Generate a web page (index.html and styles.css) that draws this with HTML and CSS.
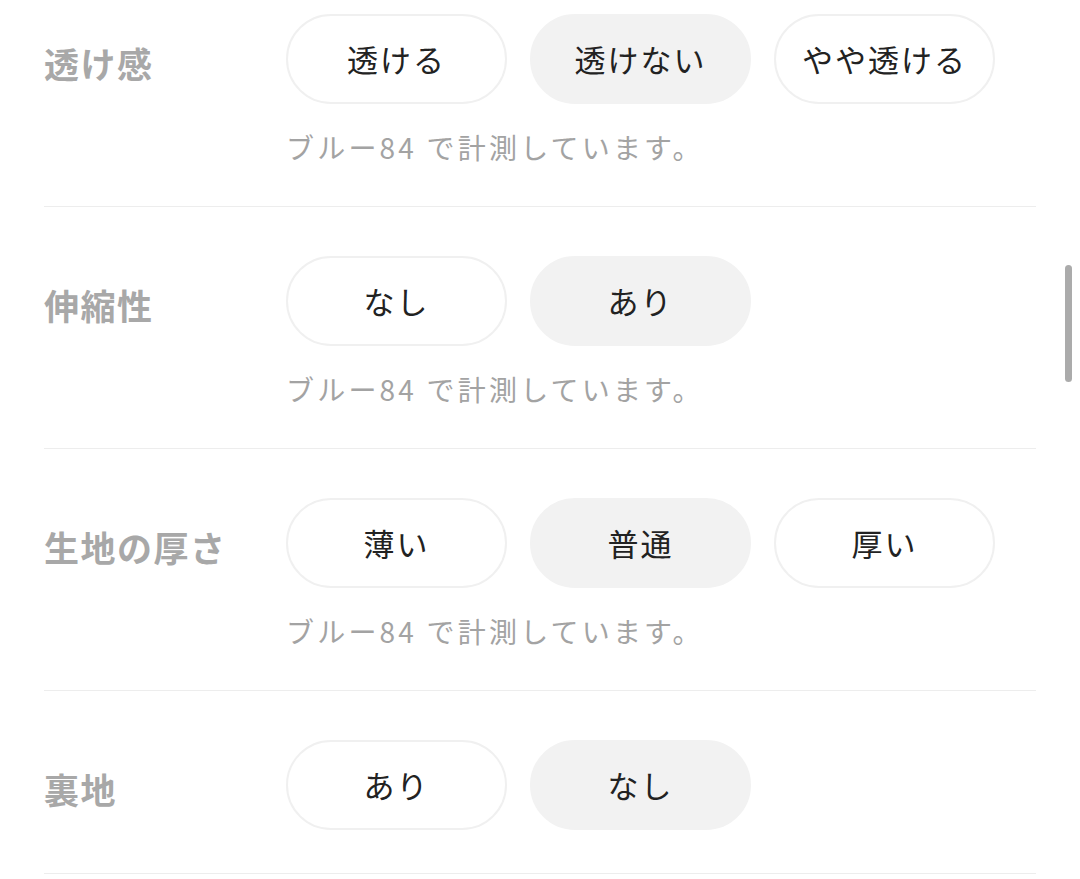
FILE: index.html
```html
<!DOCTYPE html>
<html lang="ja">
<head>
    <meta charset="UTF-8">
    <title>生地の特徴</title>
    <link rel="stylesheet" href="styles.css">
</head>
<body>
<div id="spec-list">
    <div class="spec-row">
        <div class="spec-label">透け感</div>
        <div class="spec-body">
            <div class="option-list">
                <span class="option">透ける</span>
                <span class="option selected">透けない</span>
                <span class="option">やや透ける</span>
            </div>
            <div class="spec-note">ブルー84 で計測しています。</div>
        </div>
    </div>
    <div class="spec-row">
        <div class="spec-label">伸縮性</div>
        <div class="spec-body">
            <div class="option-list">
                <span class="option">なし</span>
                <span class="option selected">あり</span>
            </div>
            <div class="spec-note">ブルー84 で計測しています。</div>
        </div>
    </div>
    <div class="spec-row">
        <div class="spec-label">生地の厚さ</div>
        <div class="spec-body">
            <div class="option-list">
                <span class="option">薄い</span>
                <span class="option selected">普通</span>
                <span class="option">厚い</span>
            </div>
            <div class="spec-note">ブルー84 で計測しています。</div>
        </div>
    </div>
    <div class="spec-row">
        <div class="spec-label">裏地</div>
        <div class="spec-body">
            <div class="option-list">
                <span class="option">あり</span>
                <span class="option selected">なし</span>
            </div>
        </div>
    </div>
</div>
<div id="bottom-bar"></div>
<div id="scroll-thumb"></div>
</body>
</html>
```

FILE: styles.css
```css
body {
    margin: 0;
    padding: 0;
    background: #fff;
    font-family: "Noto Sans CJK JP", "Noto Sans", sans-serif;
    overflow: hidden;
}
#spec-list {
    margin: -35px 44px 0 44px;
}
.spec-row {
    display: grid;
    grid-template-columns: 242px 1fr;
    padding: 49px 0 39px 0;
    border-bottom: 1px solid #ededed;
}
.spec-label {
    height: 90px;
    line-height: 90px;
    padding-top: 4px;
    font-size: 35px;
    font-weight: bold;
    color: #a8a8a8;
    letter-spacing: 1.5px;
}
.option-list {
    display: flex;
    gap: 23px;
}
.option {
    box-sizing: border-box;
    width: 221px;
    height: 90px;
    line-height: 86px;
    border: 2px solid #f0f0f0;
    border-radius: 45px;
    text-align: center;
    font-size: 31px;
    color: #222;
    letter-spacing: 2px;
}
.option.selected {
    background: #f2f2f2;
    border-color: #f2f2f2;
}
.spec-note {
    margin-top: 23px;
    height: 40px;
    line-height: 40px;
    font-size: 28px;
    color: #a3a3a3;
    letter-spacing: 3.2px;
}
#bottom-bar {
    margin-top: 6px;
    height: 2px;
    background: #9a9a9a;
}
#scroll-thumb {
    position: fixed;
    top: 265px;
    right: 8px;
    width: 7px;
    height: 117px;
    border-radius: 4px;
    background: #ababab;
}
```
